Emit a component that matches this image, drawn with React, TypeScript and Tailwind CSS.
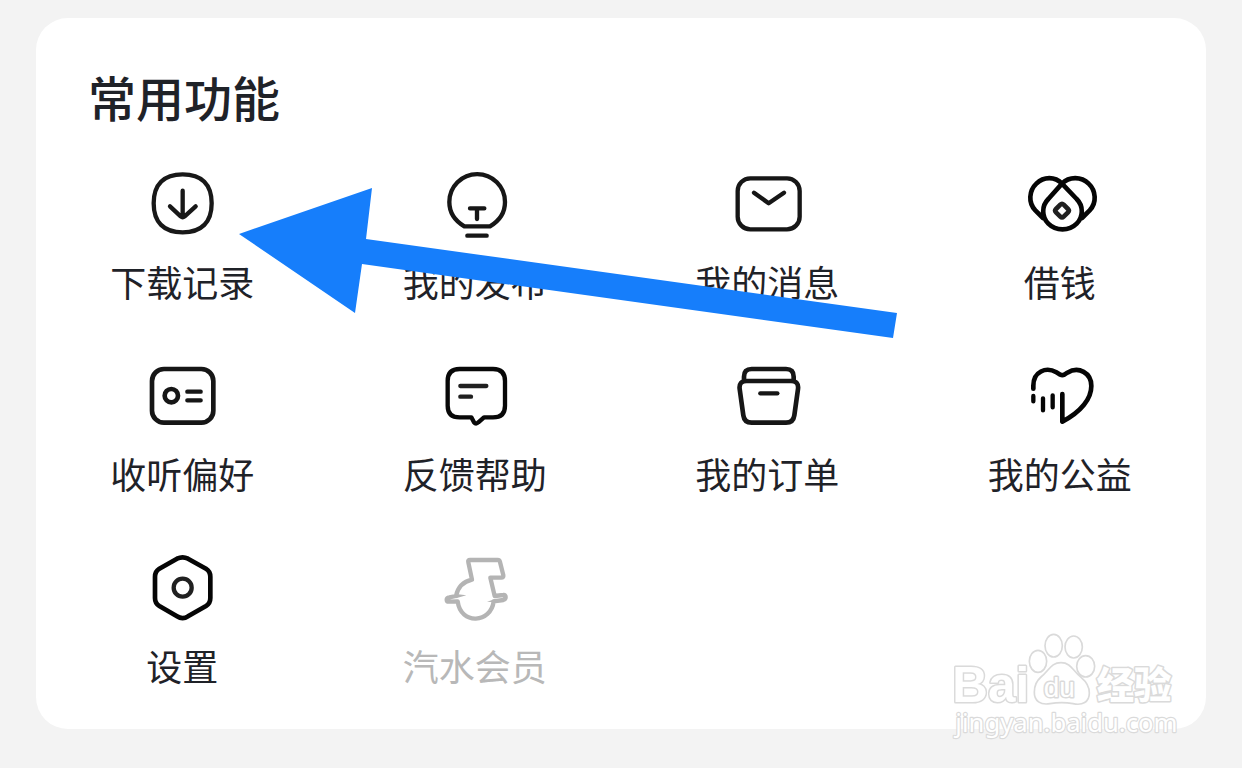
import type { ReactNode } from "react";

type Feature = {
  label: string;
  viewBox: string;
  icon: ReactNode;
  muted?: boolean;
};

const features: Feature[] = [
  {
    label: "下载记录",
    viewBox: "-8 0 270 270",
    icon: (
      <g stroke="#181818" strokeWidth="13">
        <path d="M129 43C186 43 216 73 216 130S186 217 129 217 42 187 42 130 72 43 129 43Z" />
        <path d="M129 92V171M91 139L123 169Q129 174 135 169L168 139" />
      </g>
    ),
  },
  {
    label: "我的发布",
    viewBox: "-1 0 270 270",
    icon: (
      <g stroke="#161616" strokeWidth="13">
        <path d="M102 199C75 183 57 158 57 126A83.500 83.500 0 0 1 224 126C224 158 206 183 179 199Z" />
        <path d="M119 145H162M140 145V177M111 227H169" />
      </g>
    ),
  },
  {
    label: "我的消息",
    viewBox: "-5 0 270 270",
    icon: (
      <g stroke="#161616" strokeWidth="13">
        <rect x="42" y="55" width="186" height="153" rx="38" />
        <path d="M91 98L135 130L181 98" />
      </g>
    ),
  },
  {
    label: "借钱",
    viewBox: "-4 0 270 270",
    icon: (
      <g stroke="#050505" strokeWidth="14">
        <path d="M80 174L57 151C35 128 38 92 60 71C82 49 116 49 137 71L181 117C202 138 201 171 181 191C158 214 119 214 96 191C76 171 75 138 96 117L137 71C158 49 195 49 217 71C239 92 242 128 220 151L197 174" />
        <path d="M132 134Q137 129 142 134L155 147Q160 152 155 157L142 170Q137 175 132 170L119 157Q114 152 119 147Z" strokeWidth="14" stroke="#202020" />
      </g>
    ),
  },
  {
    label: "收听偏好",
    viewBox: "-8 6 270 270",
    icon: (
      <g stroke="#161616" strokeWidth="14">
        <rect x="37" y="57" width="184" height="161" rx="36" />
        <circle cx="95" cy="137" r="20" />
        <path d="M143 125H183M143 151H183" strokeWidth="13" />
      </g>
    ),
  },
  {
    label: "反馈帮助",
    viewBox: "-1 6 270 270",
    icon: (
      <g stroke="#080808" strokeWidth="13">
        <path d="M88 57H188Q224 57 224 93V167Q224 202 188 202H161L144 217Q137 224 131 217L123 202H88Q52 202 52 167V93Q52 57 88 57Z" />
        <path d="M90 108H168M90 140H122" stroke="#202020" />
      </g>
    ),
  },
  {
    label: "我的订单",
    viewBox: "-5 6 270 270",
    icon: (
      <g stroke="#161616" strokeWidth="14">
        <path d="M61 93V80Q61 57 84 57H187Q210 57 210 80V93" />
        <path d="M69 93H202Q226 93 223 117L212 196Q209 218 187 218H84Q62 218 59 196L48 117Q45 93 69 93Z" />
        <path d="M110 130H161" strokeWidth="13" />
      </g>
    ),
  },
  {
    label: "我的公益",
    viewBox: "-4 6 270 270",
    icon: (
      <g stroke="#050505" strokeWidth="14">
        <path d="M51 116V107C51 65 89 49 120 67L132 74Q138 77 144 74L153 68C187 48 225 68 225 108C225 146 195 185 138 215V132" />
        <path d="M51 138V154M80 145V181M109 136V172" strokeWidth="13" />
      </g>
    ),
  },
  {
    label: "设置",
    viewBox: "-8 0 270 270",
    icon: (
      <g stroke="#050505" strokeWidth="14">
        <path d="M112 44Q129 36 145 44L199 74Q212 82 212 98V162Q212 178 199 186L145 217Q129 228 112 217L59 186Q46 178 46 162V98Q46 82 59 74Z" />
        <circle cx="129" cy="131" r="27" strokeWidth="13" stroke="#202020" />
      </g>
    ),
  },
  {
    label: "汽水会员",
    viewBox: "-1 0 270 270",
    muted: true,
    icon: (
      <g stroke="#b4b4b4" strokeWidth="13">
        <path d="M125 107L114 55Q112 48 119 48H202Q208 48 209 54L219 94Q220 101 213 101H180L193 156L219 153Q226 152 226 159T219 168L190 172C183 237 91 245 82 172L56 173Q49 173 49 167T57 160L77 156C82 132 98 113 125 107" />
        <path d="M77 150L108 154L77 163ZM195 165L170 173L195 175Z" fill="#b4b4b4" stroke="none" />
      </g>
    ),
  },
];

function Watermark() {
  return (
    <svg
      className="pointer-events-none absolute -bottom-[14px] right-[26px] h-[114px] w-[230px]"
      viewBox="30 15 690 342"
      fill="#ffffff"
      stroke="#dadada"
      strokeWidth="5"
      strokeLinejoin="round"
      aria-label="Baidu 经验"
    >
      <ellipse cx="294" cy="112" rx="26" ry="33" />
      <ellipse cx="341" cy="65" rx="26" ry="34" />
      <ellipse cx="401" cy="69" rx="26" ry="33" />
      <ellipse cx="437" cy="127" rx="27" ry="32" />
      <path d="M303 159C328 139 333 116 363 116S398 140 424 161C442 176 448 188 448 207C448 235 427 245 399 239C373 234 352 235 330 239C302 244 282 231 283 204C283 183 289 171 303 159Z" />
      <g strokeWidth="9" paintOrder="stroke" fontWeight="700">
        <text x="37" y="235" fontSize="148" fontFamily="Liberation Sans, sans-serif">Bai</text>
        <text x="311" y="220" fontSize="84" fontWeight="400" fontFamily="Liberation Sans, sans-serif">du</text>
        <text x="470" y="226" fontSize="112" fontWeight="900" fontFamily="Noto Sans CJK SC, sans-serif">经验</text>
        <text x="46" y="325" fontSize="77" strokeWidth="7" fontWeight="400" fontFamily="Noto Sans, sans-serif">jingyan.baidu.com</text>
      </g>
    </svg>
  );
}

export default function App() {
  return (
    <main className="min-h-screen bg-[#f3f3f3] px-9 py-[18px] font-['Noto_Sans_CJK_SC',sans-serif] text-[#1f2228]">
      <section className="relative rounded-[32px] bg-white pb-10 pt-[42px]">
        <h1 className="mb-7 px-[52px] text-[48px] font-medium leading-[72px]">常用功能</h1>
        <nav className="grid grid-cols-4 gap-y-[47px]" aria-label="常用功能">
          {features.map((feature) => (
            <a
              key={feature.label}
              href="#"
              className={
                feature.muted
                  ? "flex flex-col items-center gap-[7px] text-[#b8b8b8]"
                  : "flex flex-col items-center gap-[7px]"
              }
            >
              <svg
                className="size-[90px]"
                viewBox={feature.viewBox}
                fill="none"
                strokeLinecap="round"
                strokeLinejoin="round"
                aria-hidden="true"
              >
                {feature.icon}
              </svg>
              <span className="text-[36px] leading-[48px]">{feature.label}</span>
            </a>
          ))}
        </nav>
        <svg
          className="pointer-events-none absolute left-[200px] top-[168px] h-[156px] w-[664px]"
          viewBox="236 186 664 156"
          fill="#167efb"
          aria-hidden="true"
        >
          <path d="M239 234L372 188L366 239L897 313L893 338L362 264L355 313Z" />
        </svg>
        <Watermark />
      </section>
    </main>
  );
}
